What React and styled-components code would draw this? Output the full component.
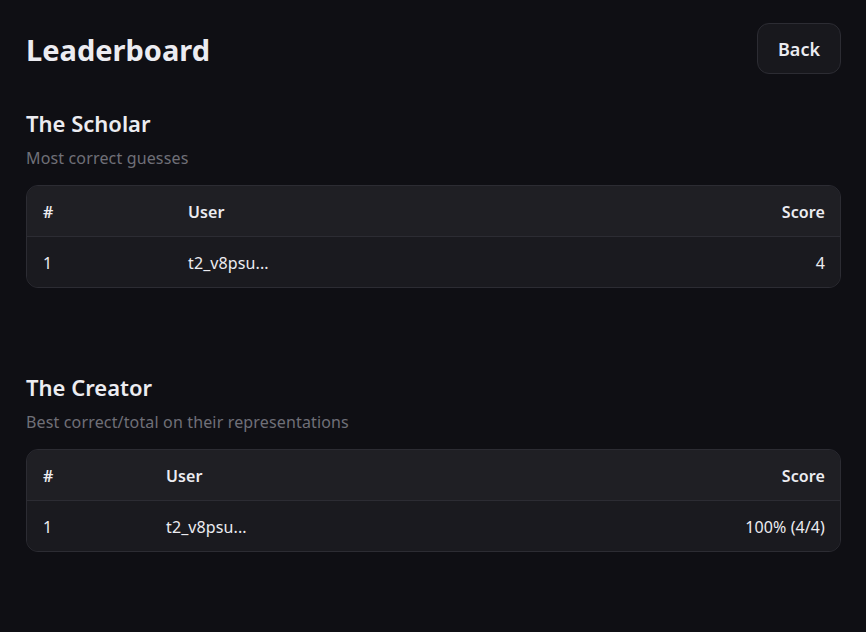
import React from "react";
import styled, { createGlobalStyle } from "styled-components";

const GlobalStyle = createGlobalStyle`
  html, body {
    margin: 0;
    padding: 0;
    background: #0f0f14;
  }
  body {
    font-family: "Noto Sans", "Open Sans", sans-serif;
    color: #ececf1;
  }
`;

const Page = styled.div`
  min-height: 632px;
  box-sizing: border-box;
  padding: 23px 25px 40px 26px;
`;

const Header = styled.header`
  display: flex;
  align-items: center;
  justify-content: space-between;
  margin-bottom: 35px;
`;

const Title = styled.h1`
  margin: 0;
  padding-top: 2px;
  font-size: 29px;
  font-weight: 700;
  line-height: 36px;
  color: #ececf1;
`;

const BackButton = styled.button`
  height: 51px;
  padding: 0 20px;
  border: 1px solid #2c2c33;
  border-radius: 12px;
  background: #18181d;
  color: #ececf1;
  font-family: inherit;
  font-size: 18px;
  font-weight: 600;
  cursor: pointer;
`;

const Section = styled.section`
  & + & {
    margin-top: 85px;
  }
`;

const SectionTitle = styled.h2`
  margin: 0 0 9px;
  font-size: 22px;
  font-weight: 600;
  line-height: 28px;
  color: #ececf1;
`;

const Subtitle = styled.p`
  margin: 0 0 15px;
  font-size: 16px;
  letter-spacing: 0.15px;
  line-height: 24px;
  color: #6f6f78;
`;

const Table = styled.div`
  border: 1px solid #2c2c33;
  border-radius: 12px;
  overflow: hidden;
  background: #1a1a1f;
`;

const Row = styled.div`
  display: grid;
  grid-template-columns: ${(p) => p.$cols};
  align-items: center;
  box-sizing: border-box;
  height: 50px;
  padding: 2px 15px 0 16px;
  font-size: 16px;
  letter-spacing: 0.1px;
  background: ${(p) => (p.$head ? "#1f1f24" : "#1a1a1f")};
  font-weight: ${(p) => (p.$head ? 600 : 400)};
  & + & {
    height: 51px;
    border-top: 1px solid #2c2c33;
  }
`;

const Cell = styled.div`
  text-align: ${(p) => (p.$right ? "right" : "left")};
  white-space: nowrap;
`;

const boards = [
  {
    title: "The Scholar",
    subtitle: "Most correct guesses",
    cols: "145px 1fr auto",
    rows: [{ rank: 1, user: "t2_v8psu...", score: "4" }],
  },
  {
    title: "The Creator",
    subtitle: "Best correct/total on their representations",
    cols: "123px 1fr auto",
    rows: [{ rank: 1, user: "t2_v8psu...", score: "100% (4/4)" }],
  },
];

export default function App() {
  return (
    <>
      <GlobalStyle />
      <Page>
        <Header>
          <Title>Leaderboard</Title>
          <BackButton>Back</BackButton>
        </Header>
        {boards.map((b) => (
          <Section key={b.title}>
            <SectionTitle>{b.title}</SectionTitle>
            <Subtitle>{b.subtitle}</Subtitle>
            <Table>
              <Row $head $cols={b.cols}>
                <Cell>#</Cell>
                <Cell>User</Cell>
                <Cell $right>Score</Cell>
              </Row>
              {b.rows.map((r) => (
                <Row key={r.rank} $cols={b.cols}>
                  <Cell>{r.rank}</Cell>
                  <Cell>{r.user}</Cell>
                  <Cell $right>{r.score}</Cell>
                </Row>
              ))}
            </Table>
          </Section>
        ))}
      </Page>
    </>
  );
}
